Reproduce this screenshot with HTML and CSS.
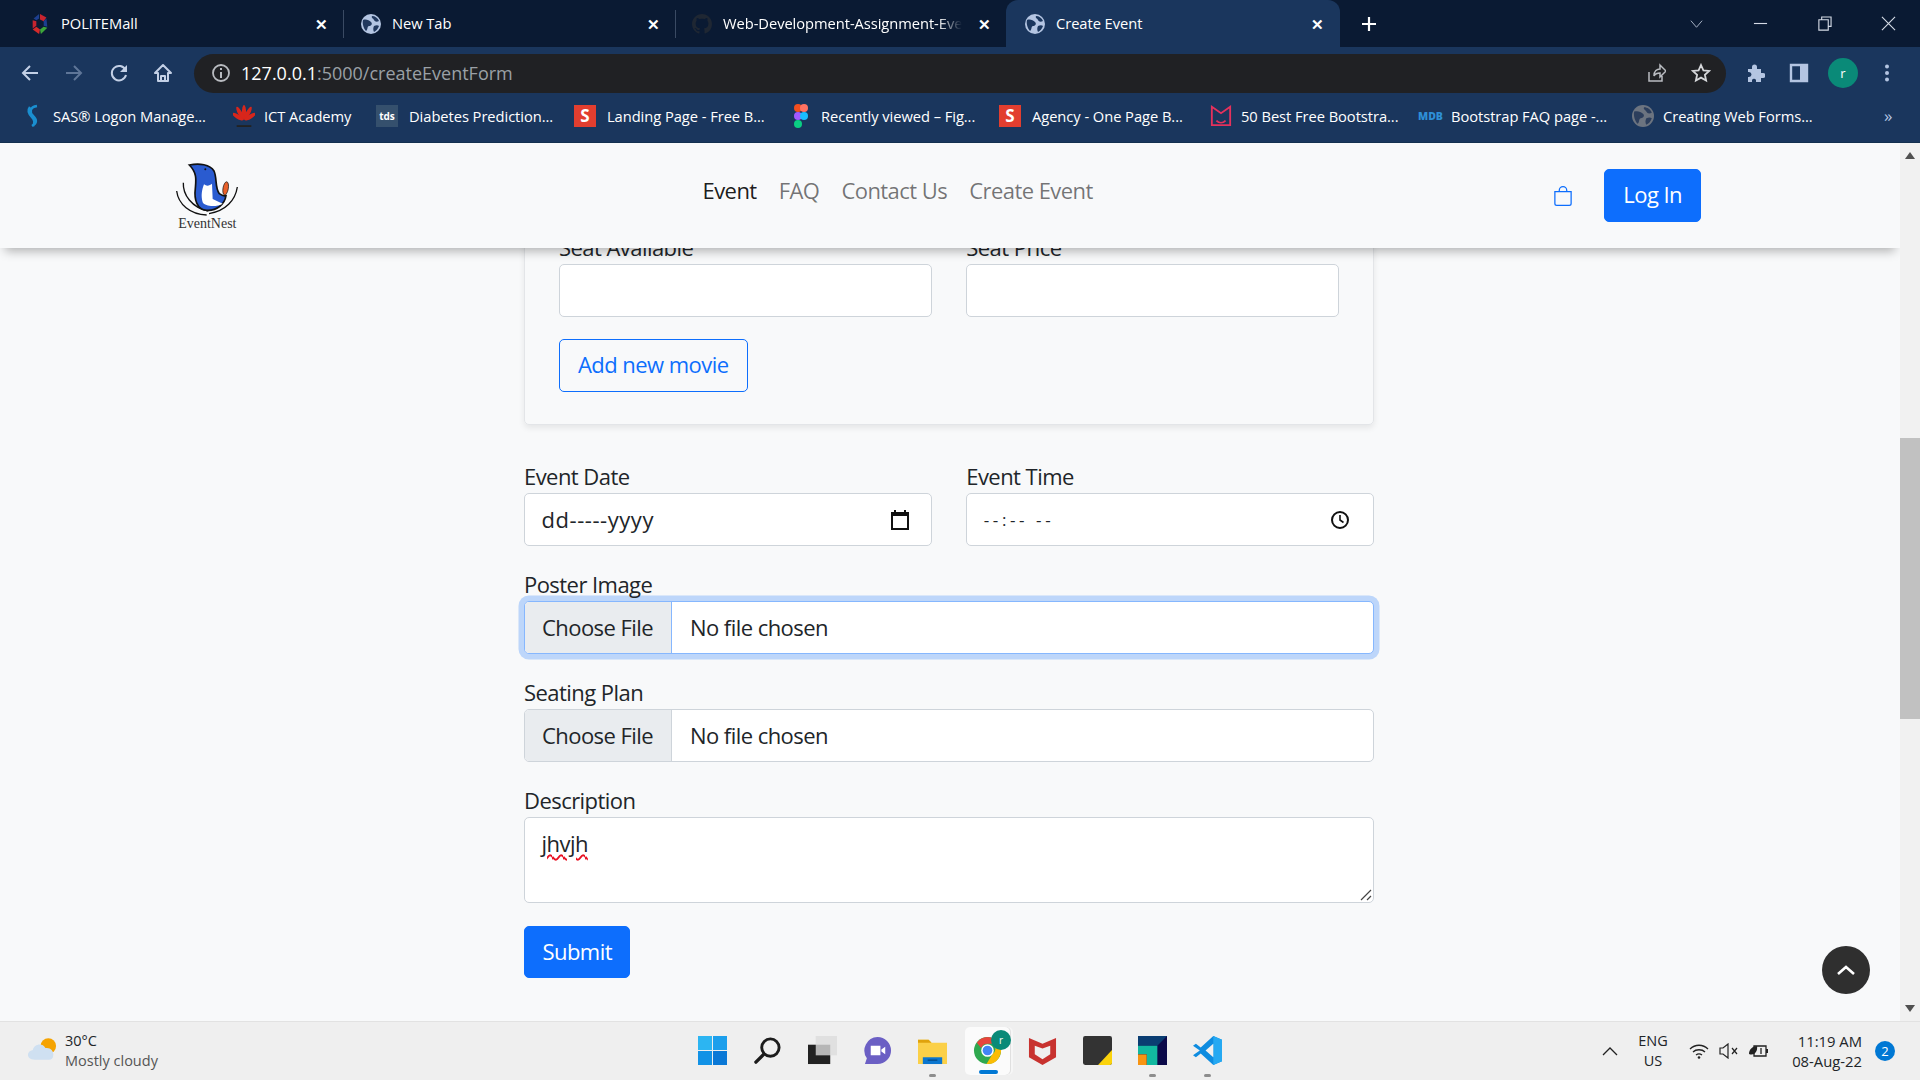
FILE: index.html
```html
<!DOCTYPE html>
<html>
<head>
	<title>Create Event</title>
	<link rel="stylesheet" href="styles.css">
</head>
<body>
	<div class="tabstrip">
		<div class="tab tab1">
			<svg class="fav" viewBox="0 0 20 24"><path d="M10 1 17 5 14 9 10 7z" fill="#c8242f"/><path d="M17 6 18 15 14 14 14 9z" fill="#1d3f8f"/><path d="M18 16 11 23 10 18 14 15z" fill="#3da63a"/><path d="M9 23 2 18 6 15 10 18z" fill="#d42a2a"/><path d="M2 17 2 8 6 9 6 14z" fill="#c8242f"/><path d="M3 6 9 1 9 6 6 8z" fill="#1d3f8f"/></svg>
			<span class="tab-title">POLITEMall</span>
			<span class="tab-close">&#10005;</span>
		</div>
		<div class="tab tab2">
			<svg class="fav" viewBox="0 0 20 20"><circle cx="10" cy="10" r="10" fill="#b4c5e2"/><path d="M2 6c3-1 6 0 8 2s0 4-2 4-1 4-3 5C3 15 1 10 2 6zM11 2c3 0 6 2 7 5-2 1-4 1-5-1s-3-2-2-4zM13 12c2-1 4-1 5 0-1 3-3 5-5 6-1-2-1-4 0-6z" fill="#22395e"/></svg>
			<span class="tab-title">New Tab</span>
			<span class="tab-close">&#10005;</span>
		</div>
		<div class="tab tab3">
			<svg class="fav" viewBox="0 0 16 16"><path fill="#1f2733" d="M8 0C3.58 0 0 3.58 0 8c0 3.54 2.29 6.53 5.47 7.59.4.07.55-.17.55-.38 0-.19-.01-.82-.01-1.49-2.01.37-2.53-.49-2.69-.94-.09-.23-.48-.94-.82-1.13-.28-.15-.68-.52-.01-.53.63-.01 1.08.58 1.23.82.72 1.21 1.87.87 2.33.66.07-.52.28-.87.51-1.07-1.78-.2-3.64-.89-3.64-3.95 0-.87.31-1.59.82-2.15-.08-.2-.36-1.02.08-2.12 0 0 .67-.21 2.2.82.64-.18 1.32-.27 2-.27s1.36.09 2 .27c1.53-1.04 2.2-.82 2.2-.82.44 1.1.16 1.92.08 2.12.51.56.82 1.27.82 2.15 0 3.07-1.87 3.75-3.65 3.95.29.25.54.73.54 1.48 0 1.07-.01 1.93-.01 2.2 0 .21.15.46.55.38A8.01 8.01 0 0 0 16 8c0-4.42-3.58-8-8-8z"/></svg>
			<span class="tab-title faded">Web-Development-Assignment-Eve</span>
			<span class="tab-close">&#10005;</span>
		</div>
		<div class="tab tab-active">
			<svg class="fav" viewBox="0 0 20 20"><circle cx="10" cy="10" r="10" fill="#b4c5e2"/><path d="M2 6c3-1 6 0 8 2s0 4-2 4-1 4-3 5C3 15 1 10 2 6zM11 2c3 0 6 2 7 5-2 1-4 1-5-1s-3-2-2-4zM13 12c2-1 4-1 5 0-1 3-3 5-5 6-1-2-1-4 0-6z" fill="#1a365d"/></svg>
			<span class="tab-title">Create Event</span>
			<span class="tab-close">&#10005;</span>
		</div>
		<svg class="new-tab" viewBox="0 0 16 16"><path d="M8 1v14M1 8h14" stroke="#fff" stroke-width="2.2"/></svg>
		<div class="win-controls">
			<svg viewBox="0 0 16 16"><path d="M2 5l6 7 6-7" fill="none" stroke="#aeb9cb" stroke-width="1"/></svg>
			<svg viewBox="0 0 16 16"><path d="M1 8h14" stroke="#d5dbe6" stroke-width="1.2"/></svg>
			<svg viewBox="0 0 16 16"><path d="M2 4h10v11H2zM5 4V1h10v10h-3" fill="none" stroke="#d5dbe6" stroke-width="1.2"/></svg>
			<svg viewBox="0 0 16 16"><path d="M1 1l14 14M15 1L1 15" stroke="#d5dbe6" stroke-width="1.2"/></svg>
		</div>
	</div>

	<div class="toolbar">
		<div class="tool-btns">
			<svg viewBox="0 0 20 20"><path d="M18 10H3M10 3l-7 7 7 7" fill="none" stroke="#c3d0e6" stroke-width="2"/></svg>
			<svg viewBox="0 0 20 20"><path d="M2 10h15M10 3l7 7-7 7" fill="none" stroke="#5f7698" stroke-width="2"/></svg>
			<svg viewBox="0 0 20 20"><path d="M16.5 7A7.2 7.2 0 1 0 17 12" fill="none" stroke="#c3d0e6" stroke-width="2"/><path d="M18 2v7h-7z" fill="#c3d0e6"/></svg>
			<svg viewBox="0 0 20 20"><path d="M10 2 2 10h3v8h10v-8h3zM8 18v-5h4v5" fill="none" stroke="#c3d0e6" stroke-width="2" stroke-linejoin="round"/></svg>
		</div>
		<div class="omnibox">
			<svg class="info" viewBox="0 0 20 20"><circle cx="10" cy="10" r="8" fill="none" stroke="#b9bcc1" stroke-width="1.8"/><path d="M10 9v6M10 5v2" stroke="#b9bcc1" stroke-width="2"/></svg>
			<span class="url"><b>127.0.0.1</b>:5000/createEventForm</span>
			<svg class="omni-icon" viewBox="0 0 20 20"><path d="M3 9v9h13v-5M8 13c0-5 3-7 6-7V2l6 6-6 6v-4c-3 0-5 1-6 3z" fill="none" stroke="#b9bcc1" stroke-width="1.5"/></svg>
			<svg class="omni-icon" viewBox="0 0 20 20"><path d="M10 2l2.4 5.3 5.8.6-4.3 3.9 1.2 5.7L10 14.6 4.900 17.500l1.200-5.700L1.800 7.900l5.800-.6z" fill="none" stroke="#d5d7da" stroke-width="1.8"/></svg>
		</div>
		<div class="tool-right">
			<svg viewBox="0 0 20 20"><path d="M3 6h4V4a2.500 2.500 0 0 1 5 0v2h4v4h2a2.500 2.500 0 0 1 0 5h-2v4h-5v-2a2.200 2.200 0 0 0-4 0v2H3v-5h1a2.500 2.500 0 0 0 0-5H3z" fill="#b4c5e2"/></svg>
			<svg viewBox="0 0 20 20"><path d="M2 2h16v16H2z" fill="none" stroke="#b4c5e2" stroke-width="2.400"/><path d="M11 2h7v16h-7z" fill="#b4c5e2"/></svg>
			<span class="avatar">r</span>
			<svg viewBox="0 0 20 20"><circle cx="10" cy="3.500" r="2" fill="#b4c5e2"/><circle cx="10" cy="10" r="2" fill="#b4c5e2"/><circle cx="10" cy="16.500" r="2" fill="#b4c5e2"/></svg>
		</div>
	</div>

	<div class="bookmarks">
		<div class="bm">
			<svg viewBox="0 0 20 24"><path d="M14 2C7 3 6 8 10 12s4 7-1 10M7 3c-3 4-1 7 2 10s3 6 1 9" fill="none" stroke="#1a8fd0" stroke-width="2.500"/></svg>
			<span>SAS&reg; Logon Manage...</span>
		</div>
		<div class="bm">
			<svg viewBox="0 0 24 26">
				<g fill="#d8261c">
					<ellipse cx="12" cy="9" rx="2.300" ry="8"/>
					<ellipse cx="12" cy="9" rx="2.300" ry="8" transform="rotate(-28 12 18)"/>
					<ellipse cx="12" cy="9" rx="2.300" ry="8" transform="rotate(28 12 18)"/>
					<ellipse cx="12" cy="10" rx="2.300" ry="7" transform="rotate(-58 12 18)"/>
					<ellipse cx="12" cy="10" rx="2.300" ry="7" transform="rotate(58 12 18)"/>
				</g>
				<path d="M4 23h16v2H4z" fill="#222"/>
			</svg>
			<span>ICT Academy</span>
		</div>
		<div class="bm">
			<span class="bm-tile tds">tds</span>
			<span>Diabetes Prediction...</span>
		</div>
		<div class="bm">
			<span class="bm-tile sletter">S</span>
			<span>Landing Page - Free B...</span>
		</div>
		<div class="bm">
			<svg viewBox="0 0 16 24"><circle cx="5" cy="4" r="4" fill="#f24e1e"/><circle cx="11" cy="4" r="4" fill="#ff7262"/><circle cx="5" cy="12" r="4" fill="#a259ff"/><circle cx="11" cy="12" r="4" fill="#1abcfe"/><circle cx="5" cy="20" r="4" fill="#0acf83"/></svg>
			<span>Recently viewed &ndash; Fig...</span>
		</div>
		<div class="bm">
			<span class="bm-tile sletter">S</span>
			<span>Agency - One Page B...</span>
		</div>
		<div class="bm">
			<svg viewBox="0 0 24 24"><path d="M2 2l10 7 10-7v20H2zM7 17c3 3 7 3 10 0" fill="none" stroke="#e5315c" stroke-width="2"/></svg>
			<span>50 Best Free Bootstra...</span>
		</div>
		<div class="bm">
			<span class="mdb">MDB</span>
			<span>Bootstrap FAQ page -...</span>
		</div>
		<div class="bm">
			<svg viewBox="0 0 20 20"><circle cx="10" cy="10" r="10" fill="#6c7480"/><path d="M2 6c3-1 6 0 8 2s0 4-2 4-1 4-3 5C3 15 1 10 2 6zM11 2c3 0 6 2 7 5-2 1-4 1-5-1s-3-2-2-4zM13 12c2-1 4-1 5 0-1 3-3 5-5 6-1-2-1-4 0-6z" fill="#2c3e5c"/></svg>
			<span>Creating Web Forms...</span>
		</div>
		<span class="bm-more">&raquo;</span>
	</div>

	<div class="page">
		<div class="content">
			<header class="navbar">
				<svg class="logo" viewBox="0 0 360 270">
					<path d="M100 95c-2 35 25 75 75 85M80 120c5 40 40 70 90 72M262 108c-6 40-35 72-85 80" fill="none" stroke="#111" stroke-width="4"/>
					<path d="M118 42c30-6 62-2 74 18 10 22 2 50 16 68 8 6 14 8 20 6-4 26-28 46-58 44-30-2-38-34-34-66 2-24 6-46-18-70z" fill="#2a5bd0" stroke="#111" stroke-width="5"/>
					<path d="M162 100c10 8 18 2 24-2l2 46 30 14c-16 10-52 10-60-4-6-20-2-38 4-54z" fill="#fff"/>
					<ellipse cx="227" cy="112" rx="8" ry="20" fill="#e8602a" stroke="#111" stroke-width="2" transform="rotate(10 227 112)"/>
					<circle cx="166" cy="55" r="3" fill="#111"/>
					<text class="logo-text" x="172" y="230" text-anchor="middle">EventNest</text>
				</svg>
				<nav class="nav-links">
					<a class="active" href="#">Event</a>
					<a href="#">FAQ</a>
					<a href="#">Contact Us</a>
					<a href="#">Create Event</a>
				</nav>
				<div class="nav-actions">
					<svg class="bag" viewBox="0 0 16 16"><path fill="#0d6efd" d="M8 1a2.500 2.500 0 0 1 2.500 2.500V4h-5v-.5A2.500 2.500 0 0 1 8 1zm3.500 3v-.5a3.500 3.500 0 1 0-7 0V4H1v10a2 2 0 0 0 2 2h10a2 2 0 0 0 2-2V4h-3.500zM2 5h12v9a1 1 0 0 1-1 1H3a1 1 0 0 1-1-1V5z"/></svg>
					<button class="btn btn-primary">Log In</button>
				</div>
			</header>

			<form class="event-form">
				<div class="movie-card">
					<div class="row">
						<div>
							<label class="field-label">Seat Available</label>
							<div class="control"></div>
						</div>
						<div>
							<label class="field-label">Seat Price</label>
							<div class="control"></div>
						</div>
					</div>
					<button type="button" class="btn btn-outline">Add new movie</button>
				</div>

				<div class="row group">
					<div>
						<label class="field-label">Event Date</label>
						<div class="control picker">
							<span class="date-val">dd-----yyyy</span>
							<svg class="picker-icon cal" viewBox="0 0 20 20"><path d="M4 0h2v2h8V0h2v2h3v18H1V2h3zM3 6v12h14V6z" fill="#111"/></svg>
						</div>
					</div>
					<div>
						<label class="field-label">Event Time</label>
						<div class="control picker">
							<span class="time-val">--:-- --</span>
							<svg class="picker-icon" viewBox="0 0 20 20"><circle cx="10" cy="10" r="8" fill="none" stroke="#111" stroke-width="2"/><path d="M10 5v5l3.500 2.500" fill="none" stroke="#111" stroke-width="1.600"/></svg>
						</div>
					</div>
				</div>

				<div class="group">
					<label class="field-label">Poster Image</label>
					<div class="control file focused">
						<span class="file-btn">Choose File</span>
						<span>No file chosen</span>
					</div>
				</div>

				<div class="group">
					<label class="field-label">Seating Plan</label>
					<div class="control file">
						<span class="file-btn">Choose File</span>
						<span>No file chosen</span>
					</div>
				</div>

				<div class="group desc-group">
					<label class="field-label">Description</label>
					<div class="control textarea">
						<span class="misspelt">jhvjh</span>
						<svg class="grip" viewBox="0 0 12 12"><path d="M1 11 11 1M7 11l4-4" stroke="#444" stroke-width="1.200"/></svg>
					</div>
				</div>

				<button type="button" class="btn btn-primary btn-submit">Submit</button>
			</form>

			<div class="to-top">
				<svg viewBox="0 0 20 12"><path d="M2 10l8-7 8 7" fill="none" stroke="#fff" stroke-width="2.600"/></svg>
			</div>
		</div>

		<div class="scrollbar">
			<span class="arrow-up"></span>
			<span class="thumb"></span>
			<span class="arrow-down"></span>
		</div>
	</div>

	<div class="taskbar">
		<div class="weather">
			<svg viewBox="0 0 32 26"><circle cx="22" cy="10" r="8" fill="#f5a301"/><path d="M8 24c-9 0-9-9-2-10 1-6 10-8 13-2 6-1 9 4 8 8 0 3-2 4-4 4z" fill="#cfe0f1"/></svg>
			<div>
				<div class="temp">30&deg;C</div>
				<div class="sky">Mostly cloudy</div>
			</div>
		</div>
		<div class="task-icons">
			<span class="task">
				<svg viewBox="0 0 30 30"><path d="M0 0h14.500v14.500H0z" fill="#2cb5f2"/><path d="M15.500 0H30v14.500H15.500z" fill="#1c9fec"/><path d="M0 15.500h14.500V30H0z" fill="#1292e6"/><path d="M15.500 15.500H30V30H15.500z" fill="#0a78d6"/></svg>
			</span>
			<span class="task">
				<svg viewBox="0 0 30 30"><circle cx="18" cy="12" r="9" fill="none" stroke="#1c1c1c" stroke-width="3"/><path d="M11 19l-8 8" stroke="#1c1c1c" stroke-width="3.500" stroke-linecap="round"/></svg>
			</span>
			<span class="task">
				<svg viewBox="0 0 30 30"><path d="M0 9h23v20H0z" fill="#222"/><path d="M8 0h22v20H8z" fill="#dcdcdc" opacity=".8"/></svg>
			</span>
			<span class="task">
				<svg viewBox="0 0 30 30"><path d="M15 1a14 14 0 0 1 0 28H2l2-6A14 14 0 0 1 15 1z" fill="#6b5fc4"/><path d="M8 10h10v10H8zM19 14l4-3v8l-4-3z" fill="#fff"/></svg>
			</span>
			<span class="task running">
				<svg viewBox="0 0 30 28"><path d="M0 3h11l3 3h16v22H0z" fill="#fbd048"/><path d="M0 3h11l3 3H0z" fill="#e0a30c"/><path d="M5 21h20v7H5z" fill="#0b76cf"/><path d="M10 24h10" stroke="#054e8e" stroke-width="1.500"/></svg>
			</span>
			<span class="task chrome-task">
				<svg viewBox="0 0 30 30"><circle cx="15" cy="15" r="14" fill="#2fa84f"/><path d="M15 1a14 14 0 0 1 12 7H15a7 7 0 0 0-6.500 4.500L4 7a14 14 0 0 1 11-6z" fill="#e8453c"/><path d="M27 8a14 14 0 0 1-13 21l6-10a7 7 0 0 0 1-11z" fill="#fbbc05"/><circle cx="15" cy="15" r="6.500" fill="#fff"/><circle cx="15" cy="15" r="5" fill="#4285f4"/></svg>
				<span class="chrome-badge">r</span>
			</span>
			<span class="task">
				<svg viewBox="0 0 28 30"><path d="M0 2l14 6 14-6v20l-14 8-14-8zM6 10v9l8 5 8-5v-9l-8 3z" fill="#c8322f" fill-rule="evenodd"/></svg>
			</span>
			<span class="task">
				<svg viewBox="0 0 27 27"><rect width="27" height="27" rx="2" fill="#333"/><path d="M14 27 27 13v12a2 2 0 0 1-2 2z" fill="#fbd30c"/></svg>
			</span>
			<span class="task running">
				<svg viewBox="0 0 30 30"><path d="M0 0h30v30H0z" fill="#0c0a4a"/><path d="M0 0h30L20 10H0z" fill="#0a3d72"/><path d="M0 10h20v20H9V19H0z" fill="#12b8a0"/><path d="M0 19h9v11H0z" fill="#f79412"/></svg>
			</span>
			<span class="task running">
				<svg viewBox="0 0 30 30"><path d="M21 0 30 4v22l-9 4L8 18l-5 4-3-2 7-5-7-5 3-2 5 4z" fill="#0e8ce0"/><path d="M21 0 30 4v22l-9 4z" fill="#25a9f2"/><path d="M21 8v14l-8-7z" fill="#f0f0f0"/></svg>
			</span>
		</div>
		<div class="tray">
			<svg class="tray-chevron" viewBox="0 0 16 10"><path d="M1 9l7-7 7 7" fill="none" stroke="#222" stroke-width="1.300"/></svg>
			<div class="lang">ENG<br>US</div>
			<svg class="tray-icon" viewBox="0 0 20 16"><path d="M1 6c5-5 13-5 18 0M4 9c3-3 9-3 12 0M7 12c2-1.500 4-1.500 6 0" fill="none" stroke="#222" stroke-width="1.300"/><circle cx="10" cy="14.500" r="1.300" fill="#222"/></svg>
			<svg class="tray-icon" viewBox="0 0 20 16"><path d="M1 5h3l5-4v14l-5-4H1z" fill="none" stroke="#222" stroke-width="1.200"/><path d="M13 5l5 6M18 5l-5 6" stroke="#222" stroke-width="1.200"/></svg>
			<svg class="tray-icon" viewBox="0 0 20 16"><path d="M5 3h12v10H5z" fill="none" stroke="#222" stroke-width="1.300"/><path d="M17 6h2v4h-2M0 11c0-5 4-8 8-8 1 6-3 10-8 8z" fill="#222"/><path d="M12 5v6" stroke="#222" stroke-width="1.300"/></svg>
			<div class="clock">11:19 AM<br>08-Aug-22</div>
			<span class="notify">2</span>
		</div>
	</div>
</body>
</html>
```

FILE: styles.css
```css
* {
	box-sizing: border-box;
}

html, body {
	margin: 0;
	height: 1080px;
	overflow: hidden;
}

body {
	font-family: "Open Sans", "Noto Sans", sans-serif;
	color: #212529;
	background: #f8f9fa;
}

/* browser chrome */
.tabstrip {
	height: 47px;
	background: #0a1a33;
	display: flex;
	align-items: center;
	color: #fff;
	font-size: 14.7px;
	letter-spacing: -0.05px;
}

.tab {
	height: 47px;
	display: flex;
	align-items: center;
	position: relative;
}

.tab-title {
	padding-bottom: 2px;
	white-space: nowrap;
}

.tab1 {
	width: 343px;
	padding-left: 30px;
}

.tab2 {
	width: 332px;
	padding-left: 18px;
}

.tab3 {
	width: 331px;
	padding-left: 17px;
}

.tab2::before,
.tab3::before {
	content: "";
	position: absolute;
	left: 0;
	top: 10px;
	height: 28px;
	width: 1px;
	background: #3a4a63;
}

.tab-active {
	width: 334px;
	padding-left: 19px;
	background: #1a365d;
	border-radius: 12px 12px 0 0;
}

.fav {
	width: 20px;
	height: 22px;
	flex: none;
	margin-right: 11px;
}

.faded {
	-webkit-mask-image: linear-gradient(90deg, #000 90%, transparent);
	mask-image: linear-gradient(90deg, #000 90%, transparent);
}

.tab-close {
	position: absolute;
	right: 15px;
	font-size: 15px;
	font-weight: 700;
}

.tab-active .tab-close {
	right: 16px;
}

.new-tab {
	width: 16px;
	height: 16px;
	margin-left: 21px;
}

.win-controls {
	margin-left: auto;
	display: flex;
	gap: 49px;
	padding-right: 24px;
}

.win-controls svg {
	width: 15px;
	height: 15px;
}

.toolbar {
	height: 46px;
	background: #1a365d;
	display: flex;
	align-items: center;
	padding-top: 6px;
}

.tool-btns {
	width: 194px;
	padding-left: 20px;
	display: flex;
	gap: 24.4px;
}

.tool-btns svg,
.tool-right svg {
	width: 20px;
	height: 20px;
}

.omnibox {
	width: 1532px;
	height: 39px;
	background: #202124;
	border-radius: 20px;
	display: flex;
	align-items: center;
	padding: 0 15px 0 17px;
	color: #9aa0a6;
	font-size: 18px;
}

.url {
	margin-left: 10px;
}

.url b {
	color: #fff;
	font-weight: 400;
}

.info {
	width: 20px;
	height: 20px;
}

.omni-icon {
	width: 20px;
	height: 20px;
}

.omni-icon:nth-of-type(2) {
	margin-left: auto;
}

.omni-icon:nth-of-type(3) {
	margin-left: 25px;
}

.tool-right {
	display: flex;
	align-items: center;
	gap: 24px;
	padding-left: 19px;
}

.avatar {
	width: 30px;
	height: 30px;
	border-radius: 50%;
	background: #0a8a78;
	color: #fff;
	font-size: 13px;
	display: flex;
	align-items: center;
	justify-content: center;
	margin: 0 -5px 0 -5px;
}

.bookmarks {
	height: 50px;
	background: #1a365d;
	border-bottom: 1px solid #14304f;
	color: #fff;
	font-size: 14.7px;
	letter-spacing: -0.05px;
	padding: 0 0 4px 22px;
	display: grid;
	grid-template-columns: 211px 143px 198px 216px 209px 211px 208px 214px 236px auto;
	align-items: center;
}

.bm {
	display: flex;
	align-items: center;
	gap: 9px;
	white-space: nowrap;
}

.bm svg {
	width: 22px;
	height: 24px;
	flex: none;
}

.bm-tile {
	width: 22px;
	height: 22px;
	flex: none;
	display: flex;
	align-items: center;
	justify-content: center;
	margin-right: 2px;
}

.tds {
	background: #35506d;
	font-size: 10px;
	font-weight: 700;
}

.sletter {
	background: #e23e2f;
	font-size: 17px;
	font-weight: 700;
}

.mdb {
	width: 24px;
	font-size: 10.5px;
	font-weight: 800;
	color: #2e8fd6;
	letter-spacing: 0;
}

.bm-more {
	color: #b4c5e2;
	font-size: 17px;
	padding-left: 16px;
}

/* page */
.page {
	height: 878px;
	display: flex;
}

.content {
	flex: 1;
	position: relative;
	overflow: hidden;
	padding-top: 57px;
	font-size: 22px;
	letter-spacing: -0.55px;
}

.navbar {
	position: absolute;
	top: 0;
	left: 0;
	right: 0;
	height: 105px;
	z-index: 2;
	background: #f8f9fa;
	box-shadow: 0 8px 10px -5px rgba(0, 0, 0, 0.3);
	display: flex;
	align-items: center;
	padding: 0 199px 0 150px;
}

.logo {
	width: 120px;
	height: 90px;
	margin-top: 1px;
}

.logo-text {
	font-family: "Liberation Serif", serif;
	font-size: 42px;
	letter-spacing: 0;
	fill: #333;
}

.nav-links {
	display: flex;
	gap: 22px;
	margin: 0 0 11px 432.5px;
}

.nav-links a {
	text-decoration: none;
	color: rgba(0, 0, 0, 0.55);
}

.nav-links a.active {
	color: rgba(0, 0, 0, 0.9);
}

.nav-actions {
	margin-left: auto;
	display: flex;
	align-items: center;
	gap: 31px;
}

.bag {
	width: 20px;
	height: 22px;
}

.btn {
	font: inherit;
	letter-spacing: inherit;
	height: 53px;
	padding: 0 18px 3px;
	border-radius: 5px;
	border: 1px solid #0d6efd;
}

.btn-primary {
	background: #0d6efd;
	color: #fff;
}

.btn-outline {
	background: transparent;
	color: #0d6efd;
}

.btn-submit {
	height: 52px;
	padding: 0 17.5px 3px;
}

.event-form {
	width: 850px;
	margin-left: 524px;
}

.movie-card {
	border: 1px solid #e3e5e8;
	border-radius: 5px;
	box-shadow: 0 3px 6px rgba(0, 0, 0, 0.08);
	padding: 30px 34px 32px;
	margin-bottom: 35px;
}

.row {
	display: grid;
	grid-template-columns: 1fr 1fr;
	column-gap: 34.5px;
}

.movie-card .row {
	margin-bottom: 22px;
}

.group {
	margin-bottom: 22px;
}

.desc-group {
	margin-bottom: 23px;
}

.field-label {
	display: block;
	line-height: 33px;
}

.control {
	height: 53px;
	background: #fff;
	border: 1px solid #ced4da;
	border-radius: 5px;
	display: flex;
	align-items: center;
	padding: 0 16.5px;
}

.picker {
	justify-content: space-between;
}

.date-val {
	letter-spacing: 0.55px;
	padding-bottom: 2px;
}

.time-val {
	font-size: 17px;
	letter-spacing: 3.6px;
}

.picker-icon {
	width: 20px;
	height: 20px;
	margin-right: 7px;
}

.picker-icon.cal {
	margin-right: 4px;
}

.file {
	padding: 0 0 0 0;
	gap: 18px;
	overflow: hidden;
}

.file > span {
	padding-bottom: 2px;
}

.file-btn {
	align-self: stretch;
	width: 147px;
	padding-left: 17px;
	display: flex;
	align-items: center;
	background: #e9ecef;
	border-right: 1px solid #ced4da;
}

.focused {
	border-color: #86b7fe;
	box-shadow: 0 0 0 5.5px rgba(13, 110, 253, 0.25);
}

.focused .file-btn {
	border-right-color: #86b7fe;
}

.textarea {
	height: 86px;
	align-items: flex-start;
	padding-top: 10px;
	position: relative;
}

.misspelt {
	text-decoration: underline wavy #e81123 1.5px;
	text-underline-offset: 2px;
}

.grip {
	position: absolute;
	right: 1px;
	bottom: 1px;
	width: 12px;
	height: 12px;
}

.to-top {
	position: absolute;
	left: 1822px;
	top: 803px;
	width: 48px;
	height: 48px;
	border-radius: 50%;
	background: #2f2f2f;
	display: flex;
	align-items: center;
	justify-content: center;
}

.to-top svg {
	width: 20px;
	height: 12px;
}

.scrollbar {
	width: 20px;
	background: #f1f1f1;
	display: flex;
	flex-direction: column;
	align-items: center;
}

.arrow-up {
	margin-top: 9px;
	border: 5px solid transparent;
	border-top: 0;
	border-bottom: 7px solid #505050;
}

.thumb {
	width: 100%;
	height: 281px;
	margin-top: 279px;
	background: #c1c1c1;
}

.arrow-down {
	margin-top: auto;
	margin-bottom: 9px;
	border: 5px solid transparent;
	border-bottom: 0;
	border-top: 7px solid #505050;
}

/* windows taskbar */
.taskbar {
	height: 60px;
	background: #efefef;
	border-top: 1px solid #e2e2e2;
	display: grid;
	grid-template-columns: 685px 550px 1fr;
	align-items: center;
	font-size: 14.5px;
	padding-bottom: 2px;
}

.weather {
	display: flex;
	align-items: center;
	gap: 7px;
	padding-left: 27px;
	line-height: 20px;
}

.weather svg {
	width: 31px;
	height: 26px;
	margin-bottom: 4px;
}

.sky {
	color: #555;
}

.task-icons {
	display: flex;
}

.task {
	width: 55px;
	height: 48px;
	display: flex;
	align-items: center;
	justify-content: center;
	position: relative;
}

.task svg {
	width: 29px;
	height: 29px;
}

.running::after {
	content: "";
	position: absolute;
	left: 24px;
	bottom: -2px;
	width: 7px;
	height: 3px;
	border-radius: 2px;
	background: #8d8d8d;
}

.chrome-task {
	background: #fbfbfb;
	border-radius: 5px;
	box-shadow: 1px 0 0 #e0e0e0, 3px 0 0 #f6f6f6;
	width: 45px;
	margin: 0 5px;
}

.chrome-task::after {
	content: "";
	position: absolute;
	left: 14px;
	bottom: 1px;
	width: 19px;
	height: 4px;
	border-radius: 2px;
	background: #0078d4;
}

.chrome-badge {
	position: absolute;
	right: -1px;
	top: 3px;
	width: 20px;
	height: 20px;
	border-radius: 50%;
	background: #0a8a78;
	color: #fff;
	font-size: 10px;
	display: flex;
	align-items: center;
	justify-content: center;
}

.tray {
	display: flex;
	align-items: center;
	padding-left: 367px;
}

.tray-chevron {
	width: 16px;
	height: 10px;
}

.lang {
	width: 56px;
	margin-left: 7px;
	text-align: center;
	line-height: 20px;
}

.tray-icon {
	width: 20px;
	height: 16px;
	margin-left: 10px;
}

.tray-icon:nth-of-type(2) {
	margin-left: 8px;
}

.clock {
	margin-left: 4px;
	width: 89px;
	font-size: 14.8px;
	text-align: right;
	line-height: 20px;
	white-space: nowrap;
}

.notify {
	margin-left: 13px;
	width: 20px;
	height: 20px;
	border-radius: 50%;
	background: #0078d4;
	color: #fff;
	font-size: 13px;
	display: flex;
	align-items: center;
	justify-content: center;
}
```
